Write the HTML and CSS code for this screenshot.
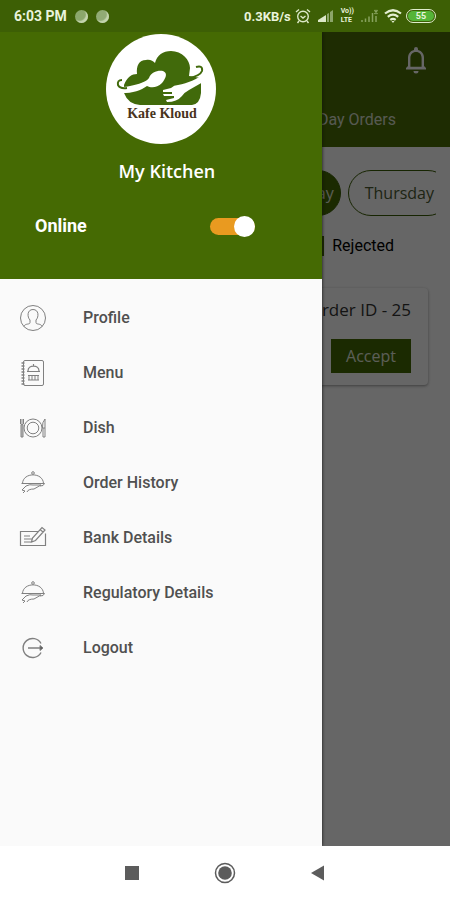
FILE: index.html
```html
<!DOCTYPE html>
<html lang="en">
<head>
<meta charset="utf-8">
<meta name="viewport" content="width=device-width, initial-scale=1">
<title>Kafe Kloud</title>
<link rel="stylesheet" href="styles.css">
</head>
<body>
<div class="status">
  <div class="status-group">
    <span class="clock">6:03 PM</span>
    <span class="dot"></span>
    <span class="dot"></span>
  </div>
  <div class="status-group status-right">
    <span class="speed">0.3KB/s</span>
    <svg width="16" height="16" viewBox="0 0 16 16" fill="none" stroke="#dce8c8" stroke-width="1.4"><circle cx="8" cy="8.500" r="5.300"/><path d="M1 4l3-2.500M15 4l-3-2.500M5.500 8l2.500 2 2.500-2M4 13l-1.500 2M12 13l1.500 2"/></svg>
    <svg class="signal" width="18" height="14" viewBox="0 0 18 14"><path d="M1 13v-2l8-5v7z" fill="#dce8c8"/><path d="M10 13V5l2-1v9zM13 13V3l3-2v12z" fill="#8ca56a"/></svg>
    <span class="lte"><span>Vo))</span><span>LTE</span></span>
    <svg class="signal" width="18" height="14" viewBox="0 0 18 14" stroke="#87a25e" stroke-width="1.500"><path d="M2 13v-2M5.500 13V9.500M9 13V7.500M12.500 13V4M16 13V7M14.500 1l3 4M17.500 1l-3 4"/></svg>
    <svg width="18" height="16" viewBox="0 0 18 16" fill="none" stroke="#e3eed2" stroke-width="2.200"><path d="M1 5.500q8-6.500 16 0M3.800 8.800q5.200-4.200 10.400 0M6.300 11.800q2.700-2 5.400 0"/><path d="M9 15l-1.500-2h3z" fill="#e3eed2" stroke="none"/></svg>
    <span class="battery"><span>55</span></span>
  </div>
</div>

<div class="stage">
  <main class="orders">
    <header class="appbar">
      <button class="bell" aria-label="Notifications">
        <svg width="24" height="28" viewBox="0 0 24 28"><path d="M12 1a2 2 0 0 1 2 2v1c4 1 6 4 6 8v8l2 2v1.500H2V22l2-2v-8c0-4 2-7 6-8V3a2 2 0 0 1 2-2zM12 6c-3.500 0-5.600 2.600-5.600 6v8.800h11.200V12c0-3.400-2.100-6-5.600-6zM9.500 25h5a2.500 2.500 0 0 1-5 0z" fill="#fff" fill-rule="evenodd"/></svg>
      </button>
      <a class="tab" href="#day">Day Orders</a>
    </header>
    <div class="chips">
      <button class="chip chip-on">Wednesday</button>
      <button class="chip chip-last">Thursday</button>
    </div>
    <div class="legend"><span class="swatch"></span><span>Rejected</span></div>
    <section class="card">
      <h2>Order ID - 25</h2>
      <button class="accept">Accept</button>
    </section>
  </main>
  <div class="scrim"></div>

  <aside class="drawer">
    <div class="profile">
      <svg class="logo" viewBox="0 0 110 110" role="img" aria-label="Kafe Kloud">
        <circle cx="55" cy="55" r="55" fill="#fff"/>
        <path d="M18 51C21 43 26 40 31 40 30 32 33 26 40 26 44 25 47 27 49 29 51 21 57 17 65 17 76 17 84 26 84 34L83 42 95 44V59Q94 70 86 71H34Q22 70 18 59z" fill="#416a0b"/>
        <path d="M10 52Q16 54 24 52C33 50 40 48 43 44 45 38 52 36 57 37 62 39 60 44 56 49 51 54 45 54 41 52 34 57 25 60 10 59z" fill="#fff"/>
        <path d="M16 46Q11 46 12 51 14 55 21 54" fill="none" stroke="#416a0b" stroke-width="2"/>
        <path d="M98 40C91 45 82 49 72 51Q68 51 65 54L57 56 57 58 66 58 66 60 57 60 58 62 68 62 68 64 60 66 61 68Q71 68 76 62 79 58 83 56L97 48z" fill="#fff"/>
        <path d="M90 33Q97 31 96 37 94 42 83 44" fill="none" stroke="#416a0b" stroke-width="2"/>
        <text x="56" y="84" text-anchor="middle" class="logo-text">Kafe Kloud</text>
      </svg>
      <h1>My Kitchen</h1>
      <div class="online">
        <label for="online">Online</label>
        <input id="online" class="switch" type="checkbox" role="switch" checked>
      </div>
    </div>
    <nav class="menu">
      <a href="#profile"><svg viewBox="0 0 28 28"><circle cx="14" cy="14" r="12.500"/><path d="M5 22.500C6 19 11 21 11 18.500V16C8 13 8 5.500 14 5.500S20 13 17 16v2.500c0 2.500 5 .5 6 4"/></svg>Profile</a>
      <a href="#menu"><svg viewBox="0 0 28 28"><rect x="4.500" y="1.500" width="20" height="25" rx="1.500"/><path d="M2.500 4h3M2.500 7h3M2.500 10h3M2.500 13h3M2.500 16h3M2.500 19h3M2.500 22h3M2.500 25h3" stroke-width="1.400"/><path d="M8 12.500h13M9 12C9 5.500 20 5.500 20 12M14.500 5v2" stroke-width="1.200"/><path d="M9 16.500h11M9 21h11M10 17v4M13 17v4M16 17v4M19 17v4"/></svg>Menu</a>
      <a href="#dish"><svg viewBox="0 0 28 28"><circle cx="14" cy="14" r="9"/><circle cx="14" cy="14" r="5.800"/><path d="M1.500 5v5q1.500 2 3 0V5M3 5v18M2 11v12h2V11M26 23V5q-3 3-2.500 9H26M24 14v9h2"/></svg>Dish</a>
      <a href="#history"><svg viewBox="0 0 28 28"><circle cx="14" cy="4" r="1.300"/><path d="M3.500 14.500C4 3 24 3 24.500 14.500M2.500 14.500h23l-1.500 2-3 .5M7 17q4-2 7-1h8l-7 4q-6 0-7 3M7 17l-4 4 3 1-2 2"/></svg>Order History</a>
      <a href="#bank"><svg viewBox="0 0 28 28"><path d="M20 7.500H1.500v14h25v-12M5 12h6M5 15h8M5 18h8M12.500 18l1-4L23 3.500l3 2.500-9.500 10.500zM21 5.500l3 2.500" stroke-width="1.200"/></svg>Bank Details</a>
      <a href="#regulatory"><svg viewBox="0 0 28 28"><circle cx="14" cy="4" r="1.300"/><path d="M3.500 14.500C4 3 24 3 24.500 14.500M2.500 14.500h23l-1.500 2-3 .5M7 17q4-2 7-1h8l-7 4q-6 0-7 3M7 17l-4 4 3 1-2 2"/></svg>Regulatory Details</a>
      <a href="#logout"><svg viewBox="0 0 28 28"><path d="M22 9.500a9.500 9.500 0 1 0 0 9M9 14h14" stroke-width="1.400"/><path d="M21 11.500l3 2.500-3 2.500z" fill="#555"/></svg>Logout</a>
    </nav>
  </aside>
</div>

<footer class="system">
  <button aria-label="Recent apps"><svg width="22" height="22" viewBox="0 0 22 22"><path d="M4 4h14v14H4z" fill="#5c5c5c"/></svg></button>
  <button aria-label="Home"><svg width="22" height="22" viewBox="0 0 22 22"><circle cx="11" cy="11" r="9.500" fill="none" stroke="#5c5c5c" stroke-width="1.500"/><circle cx="11" cy="11" r="6.800" fill="#5c5c5c"/></svg></button>
  <button aria-label="Back"><svg width="22" height="22" viewBox="0 0 22 22"><path d="M4 11l13-7.500v15z" fill="#5c5c5c"/></svg></button>
</footer>
</body>
</html>
```
FILE: styles.css
```css
* { box-sizing: border-box; }

body {
  margin: 0;
  min-height: 100vh;
  display: flex;
  flex-direction: column;
  font-family: Roboto, sans-serif;
  background: #fff;
}

button {
  border: 0;
  padding: 0;
  background: none;
  font: inherit;
}

a { text-decoration: none; }
svg { display: block; flex: none; }

.status {
  height: 32px;
  padding: 0 14px;
  display: flex;
  align-items: center;
  justify-content: space-between;
  background: #3d5f05;
  color: #e9f3dc;
}

.status-group { display: flex; align-items: center; gap: 8px; }
.status-right { gap: 4px; }
.clock { font-size: 14px; font-weight: 700; }
.speed { font-size: 13px; font-weight: 700; }

.dot {
  width: 13px;
  height: 13px;
  border-radius: 50%;
  background: #8ba76c;
  box-shadow: inset -2px -2px 1px #c4d4ae;
}

.dot + .dot { background: #91ab75; }
.signal { margin: 0 2px; }

.lte {
  display: flex;
  flex-direction: column;
  font-size: 7px;
  line-height: 9px;
  font-weight: 700;
}

.battery {
  width: 30px;
  height: 14px;
  border: 1px solid #dfedcc;
  border-radius: 7px;
  padding: 1px;
  font-size: 9px;
  line-height: 10px;
  font-weight: 700;
  text-align: center;
}

.battery span { display: block; border-radius: 5px; background: #55b437; }

.stage {
  position: relative;
  flex: 1;
  display: flex;
  overflow: hidden;
}

.orders { flex: 1; background: #fff; }

.appbar {
  height: 115px;
  padding: 14px 20px 15px;
  display: flex;
  flex-direction: column;
  justify-content: space-between;
  align-items: flex-end;
  background: #4d6f06;
}

.bell { padding: 0 2px; }

.tab {
  margin-right: 34px;
  color: #d8dfcc;
  font-size: 16px;
  line-height: 24px;
}

.chips {
  margin: 23px 14px 0;
  display: flex;
  justify-content: flex-end;
  gap: 7px;
  overflow: hidden;
}

.chip {
  height: 46px;
  padding: 0 16px;
  flex: none;
  border: 1px solid #3b5d05;
  border-radius: 23px;
  color: #4c5b32;
  font-family: "Open Sans", sans-serif;
  font-size: 16px;
}

.chip-on { padding: 0 6px; background: #456a03; color: #e0e8d4; }
.chip-last { margin-right: -15px; }

.legend {
  margin: 18px 56px 0;
  display: flex;
  justify-content: flex-end;
  align-items: center;
  gap: 8px;
  font-size: 16px;
  line-height: 24px;
}

.swatch { width: 18px; height: 20px; background: #456a03; }

.card {
  margin: 30px 22px 0;
  padding: 8px 17px 12px;
  display: flex;
  flex-direction: column;
  align-items: flex-end;
  gap: 15px;
  border-radius: 4px;
  background: #fff;
  box-shadow: 0 1px 3px #999;
}

.card h2 {
  margin: 0;
  color: #333;
  font-family: "Open Sans", sans-serif;
  font-size: 17px;
  line-height: 28px;
  font-weight: 400;
}

.accept {
  width: 80px;
  height: 34px;
  background: #456a03;
  color: #e4eadb;
  font-family: "Open Sans", sans-serif;
  font-size: 16px;
}

.scrim {
  position: absolute;
  inset: 0;
  background: rgba(0, 0, 0, 0.6);
}

.drawer {
  position: absolute;
  inset: 0 auto 0 0;
  width: 71.5%;
  background: #fafafa;
  box-shadow: 0 0 3px #111;
}

.profile {
  height: 247px;
  padding-top: 2px;
  display: flex;
  flex-direction: column;
  align-items: center;
  background: #456a03;
  color: #fff;
}

.logo { width: 110px; height: 110px; }

.logo-text {
  font-family: "Liberation Serif", serif;
  font-size: 14px;
  font-weight: 700;
  fill: #49331c;
}

.profile h1 {
  margin: 15px 0 0;
  padding-left: 12px;
  font-family: "Open Sans", sans-serif;
  font-size: 18px;
  line-height: 24px;
  font-weight: 600;
}

.online {
  width: 100%;
  margin-top: 31px;
  padding: 0 67px 0 35px;
  display: flex;
  align-items: center;
  justify-content: space-between;
  font-size: 18px;
  line-height: 24px;
  font-weight: 700;
}

.switch {
  position: relative;
  appearance: none;
  width: 45px;
  height: 17px;
  margin: 0;
  display: flex;
  align-items: center;
  justify-content: flex-end;
  background: #e99a20;
  border-radius: 9px;
}

.switch::after {
  content: "";
  flex: none;
  width: 21px;
  height: 21px;
  border-radius: 50%;
  background: #fff;
}

.menu { padding-top: 11px; }

.menu a {
  height: 55px;
  padding: 0 19px;
  display: flex;
  align-items: center;
  gap: 36px;
  color: #505050;
  font-size: 16px;
  font-weight: 500;
}

.menu svg {
  width: 28px;
  height: 28px;
  fill: none;
  stroke: #808080;
  stroke-width: 1;
}

.system {
  height: 54px;
  display: flex;
  align-items: center;
  justify-content: center;
  gap: 71px;
  background: #fff;
}
```
